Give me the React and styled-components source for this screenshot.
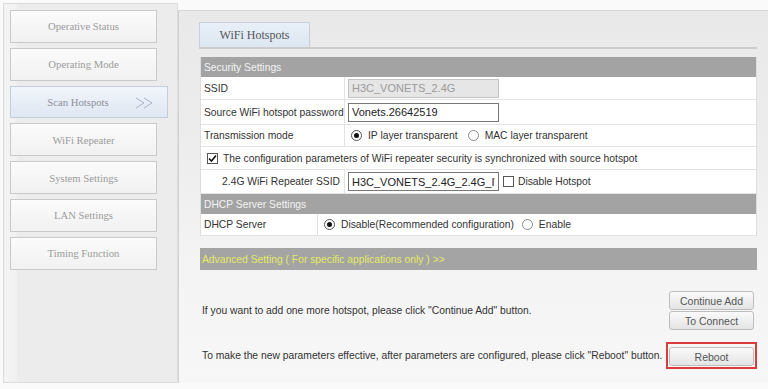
import React from "react";
import styled, { createGlobalStyle } from "styled-components";

const Global = createGlobalStyle`
  html, body { margin: 0; padding: 0; background: #fafafa; }
  body { font-family: "Liberation Sans", Arial, sans-serif; }
  * { box-sizing: border-box; }
`;

const Page = styled.div`
  display: flex;
  align-items: flex-start;
  width: 768px;
  height: 389px;
  padding: 3px 0 0 3px;
  background: #fafafa;
  overflow: hidden;
`;

const Sidebar = styled.nav`
  width: 175px;
  height: 380px;
  flex: none;
  padding: 6px 0 0 6px;
  display: flex;
  flex-direction: column;
  gap: 5px;
  border: 1px solid #dcdcdc;
  background: linear-gradient(to right, #f4f4f4 0, #f1f1f1 12px, #ececec 14px, #ececec 100%);
`;

const NavItem = styled.div`
  position: relative;
  width: ${(p) => (p.$active ? 158 : 147)}px;
  height: 32.8px;
  display: flex;
  align-items: center;
  justify-content: center;
  padding-right: ${(p) => (p.$active ? 22 : 0)}px;
  border: 1px solid ${(p) => (p.$active ? "#c3cedc" : "#c9c9c9")};
  background: ${(p) =>
    p.$active
      ? "linear-gradient(#f1f5fb, #dfe7f3)"
      : "linear-gradient(#fbfbfb, #f1f1f1)"};
  font-family: "Liberation Serif", "Times New Roman", serif;
  font-size: 10.7px;
  color: ${(p) => (p.$active ? "#8d8f99" : "#9c9c9c")};
`;

const Arrow = styled.svg`
  position: absolute;
  right: 10px;
  top: 10px;
`;

const Main = styled.main`
  flex: 1;
  height: 373px;
  margin-top: 7px;
  border-left: 1px solid #d2d2d2;
  border-top: 1px solid #d8d8d8;
  background: linear-gradient(#e9e9e9 0, #ececec 120px, #f4f4f4 260px, #f7f7f7 100%);
  padding: 11px 0 0 21px;
`;

const Content = styled.div`
  width: 557px;
  display: flex;
  flex-direction: column;
`;

const TabBar = styled.div`
  display: flex;
  border-bottom: 2px solid #cdcdcd;
  margin-left: -1px;
`;

const Tab = styled.div`
  width: 111px;
  height: 25px;
  display: flex;
  align-items: center;
  justify-content: center;
  border: 1px solid #c8d0da;
  border-bottom: none;
  background: linear-gradient(#e8eff7, #dde7f2);
  font-family: "Liberation Serif", "Times New Roman", serif;
  font-size: 12px;
  color: #555;
`;

const Table = styled.div`
  margin-top: 8px;
  border-left: 1px solid #dedede;
  border-right: 1px solid #dedede;
  background: #fff;
`;

const Header = styled.div`
  height: 20px;
  display: flex;
  align-items: center;
  padding-left: 3px;
  background: #a3a3a3;
  color: #f3f3f3;
  font-size: 10.3px;
`;

const Row = styled.div`
  display: grid;
  grid-template-columns: ${(p) => p.$cols || "144px 1fr"};
  height: ${(p) => p.$h}px;
  border-bottom: 1px solid #e3e3e3;
  font-size: 10.3px;
  color: #333;
`;

const Label = styled.div`
  display: flex;
  align-items: center;
  justify-content: ${(p) => (p.$right ? "flex-end" : "flex-start")};
  padding: 0 ${(p) => (p.$right ? 4 : 0)}px 0 3px;
  border-right: 1px solid #e3e3e3;
`;

const Value = styled.div`
  display: flex;
  align-items: center;
  padding-left: ${(p) => p.$pl ?? 3}px;
  gap: 4px;
  white-space: nowrap;
`;

const Input = styled.input`
  width: 151px;
  height: 19px;
  padding: 0 3px;
  font-family: "Liberation Sans", Arial, sans-serif;
  font-size: 11px;
  border: 1px solid ${(p) => (p.disabled ? "#c2c2c2" : "#777")};
  background: ${(p) => (p.disabled ? "#e6e6e6" : "#fff")};
  color: ${(p) => (p.disabled ? "#9a9a9a" : "#222")};
  outline: none;
  &:disabled { color: #9a9a9a; }
`;

const RadioDot = styled.span`
  width: 11px;
  height: 11px;
  flex: none;
  border-radius: 50%;
  border: 1px solid ${(p) => (p.$on ? "#555" : "#8a8a8a")};
  background: #fff;
  display: inline-flex;
  align-items: center;
  justify-content: center;
  margin-left: ${(p) => p.$ml || 0}px;
  margin-right: 2px;
  &::after {
    content: "";
    width: 5px;
    height: 5px;
    border-radius: 50%;
    background: ${(p) => (p.$on ? "#111" : "transparent")};
  }
`;

const Box = styled.span`
  width: 11px;
  height: 11px;
  flex: none;
  border: 1px solid #555;
  background: #fff;
  display: inline-flex;
  align-items: center;
  justify-content: center;
  margin-left: ${(p) => p.$ml || 0}px;
  margin-right: ${(p) => p.$mr || 0}px;
`;

const Advanced = styled.div`
  margin-top: 12px;
  height: 22px;
  display: flex;
  align-items: center;
  padding-left: 2px;
  background: #a4a4a4;
  color: #e4ea62;
  font-size: 10.3px;
`;

const Action = styled.div`
  display: flex;
  align-items: center;
  justify-content: space-between;
  margin-top: ${(p) => p.$mt}px;
  font-size: 10.3px;
  color: #333;
  padding-left: 2px;
`;

const BtnStack = styled.div`
  display: flex;
  flex-direction: column;
  gap: 1px;
  margin-right: 3px;
`;

const RedFrame = styled.div`
  border: 2px solid #dc3b3e;
  padding: 3px 1px 1px 1px;
`;

const Button = styled.button`
  width: 85px;
  height: 19px;
  padding: 0;
  border: 1px solid #bdbdbd;
  border-radius: 3px;
  background: linear-gradient(#fafafa, #e4e4e4);
  color: #555;
  font-family: "Liberation Sans", Arial, sans-serif;
  font-size: 10.5px;
`;

const navItems = [
  "Operative Status",
  "Operating Mode",
  "Scan Hotspots",
  "WiFi Repeater",
  "System Settings",
  "LAN Settings",
  "Timing Function",
];

export default function App() {
  return (
    <>
      <Global />
      <Page>
        <Sidebar>
          {navItems.map((n) => (
            <NavItem key={n} $active={n === "Scan Hotspots"}>
              {n}
              {n === "Scan Hotspots" && (
                <Arrow width="22" height="12" viewBox="0 0 22 12">
                  <path d="M1 1 L9 6 L1 11 M9 1 L17 6 L9 11" fill="none" stroke="#a9b3c2" strokeWidth="1" />
                </Arrow>
              )}
            </NavItem>
          ))}
        </Sidebar>
        <Main>
          <Content>
            <TabBar>
              <Tab>WiFi Hotspots</Tab>
            </TabBar>
            <Table>
              <Header>Security Settings</Header>
              <Row $h={23}>
                <Label>SSID</Label>
                <Value>
                  <Input disabled value="H3C_VONETS_2.4G" readOnly />
                </Value>
              </Row>
              <Row $h={25}>
                <Label>Source WiFi hotspot password</Label>
                <Value>
                  <Input value="Vonets.26642519" readOnly />
                </Value>
              </Row>
              <Row $h={22}>
                <Label>Transmission mode</Label>
                <Value $pl={6}>
                  <RadioDot $on />
                  IP layer transparent
                  <RadioDot $ml={6} />
                  MAC layer transparent
                </Value>
              </Row>
              <Row $h={23} $cols="1fr">
                <Value $pl={6}>
                  <Box $mr={1}>
                    <svg width="9" height="9" viewBox="0 0 9 9">
                      <path d="M1 4.5 L3.5 7 L8 1.5" fill="none" stroke="#111" strokeWidth="1.6" />
                    </svg>
                  </Box>
                  The configuration parameters of WiFi repeater security is synchronized with source hotspot
                </Value>
              </Row>
              <Row $h={24}>
                <Label $right>2.4G WiFi Repeater SSID</Label>
                <Value>
                  <Input value="H3C_VONETS_2.4G_2.4G_IVONETS" readOnly />
                  <Box />
                  Disable Hotspot
                </Value>
              </Row>
              <Header>DHCP Server Settings</Header>
              <Row $h={22} $cols="117px 1fr">
                <Label>DHCP Server</Label>
                <Value $pl={6}>
                  <RadioDot $on />
                  Disable(Recommended configuration)
                  <RadioDot $ml={4} />
                  Enable
                </Value>
              </Row>
            </Table>
            <Advanced>Advanced Setting ( For specific applications only ) &gt;&gt;</Advanced>
            <Action $mt={21}>
              <span>If you want to add one more hotspot, please click "Continue Add" button.</span>
              <BtnStack>
                <Button>Continue Add</Button>
                <Button>To Connect</Button>
              </BtnStack>
            </Action>
            <Action $mt={12}>
              <span>To make the new parameters effective, after parameters are configured, please click "Reboot" button.</span>
              <RedFrame>
                <Button>Reboot</Button>
              </RedFrame>
            </Action>
          </Content>
        </Main>
      </Page>
    </>
  );
}
